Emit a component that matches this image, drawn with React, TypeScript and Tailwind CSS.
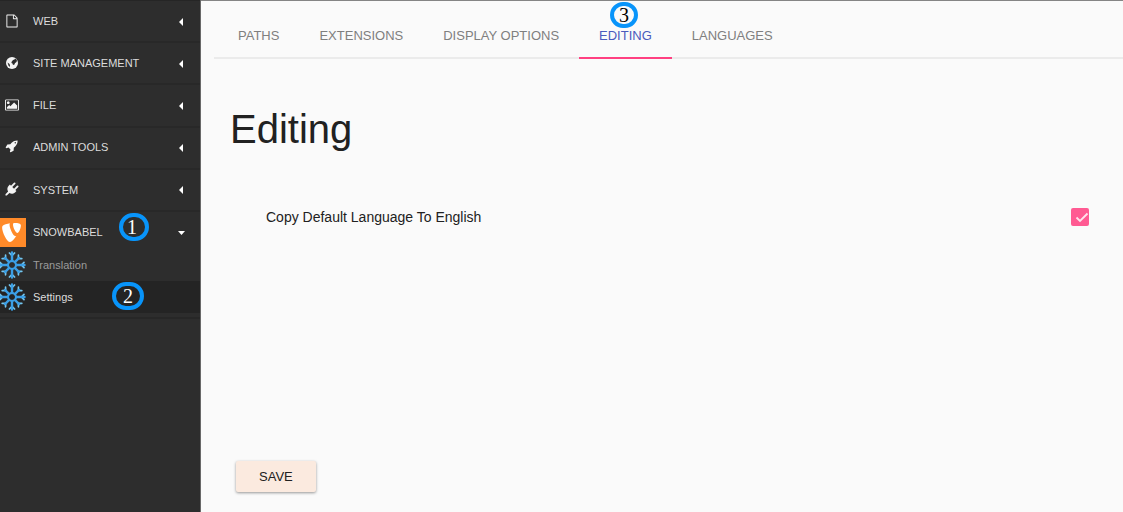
import { useState } from 'react';
import type { ReactNode } from 'react';
import { SiTypo3 } from 'react-icons/si';

const iconPaths = {
  web: 'M1596 380q28 28 48 76t20 88v1152q0 40-28 68t-68 28h-1344q-40 0-68-28t-28-68v-1600q0-40 28-68t68-28h896q40 0 88 20t76 48zm-444-244v376h376q-10-29-22-41l-313-313q-12-12-41-22zm384 1528v-1024h-416q-40 0-68-28t-28-68v-416h-768v1536h1280z',
  file: 'M576 576q0 80-56 136t-136 56-136-56-56-136 56-136 136-56 136 56 56 136zm1024 384v448h-1408v-192l320-320 160 160 512-512zm96-704h-1600q-13 0-22.5 9.5t-9.5 22.5v1216q0 13 9.5 22.5t22.5 9.5h1600q13 0 22.5-9.5t9.5-22.5v-1216q0-13-9.5-22.5t-22.5-9.5zm160 32v1216q0 66-47 113t-113 47h-1600q-66 0-113-47t-47-113v-1216q0-66 47-113t113-47h1600q66 0 113 47t47 113z',
  tools:
    'M1440 320q0-40-28-68t-68-28-68 28-28 68 28 68 68 28 68-28 28-68zm224-288q0 249-75.5 430.5t-253.5 360.5q-81 80-195 176l-20 379q-2 16-16 26l-384 224q-7 4-16 4-12 0-23-9l-64-64q-13-14-8-32l85-276-281-281-276 85q-3 1-9 1-14 0-23-9l-64-64q-17-19-5-39l224-384q10-14 26-16l379-20q96-114 176-195 188-187 358-258t431-71q14 0 24 9.5t10 22.5z',
  system:
    'M1755 453q37 38 37 90.5t-37 90.5l-401 400 150 150-160 160q-163 163-389.5 186.5t-411.5-100.5l-362 362h-181v-181l362-362q-124-185-100.5-411.5t186.5-389.5l160-160 150 150 400-401q38-37 91-37t90 37 37 90.5-37 90.5l-400 401 234 234 401-400q38-37 91-37t90 37z',
};

function PathIcon({ d }: { d: string }) {
  return (
    <svg viewBox="-64 0 1920 1792" className="h-[14px] w-[14px] fill-[#f4f4f4]" aria-hidden="true">
      <path d={d} />
    </svg>
  );
}

function GlobeIcon() {
  return (
    <svg viewBox="0 0 24 24" className="ml-px h-3 w-3" aria-hidden="true">
      <circle cx="12" cy="12" r="12" className="fill-[#f4f4f4]" />
      <path d="M11 10l3-4 3-1 1-2 3 2 1 3-2 3-2 1-1 3-3 1-1-3-2-1z" className="fill-[#2d2d2d]" />
      <path d="M3 11l4 3 1 3v3l-3-3z" className="fill-[#2d2d2d]" />
    </svg>
  );
}

const arms = [0, 45, 90, 135, 180, 225, 270, 315];

function SnowflakeIcon() {
  return (
    <svg viewBox="-14 -14 28 28" className="h-7 w-7" fill="none" strokeWidth="2.4" strokeLinecap="round" aria-hidden="true">
      {arms.map((a) => (
        <g key={a} transform={`rotate(${a})`}>
          <path d={a % 90 ? 'M-2.4-11.5 0-9 2.4-11.5' : 'M-2.6-12 0-9.5 2.6-12'} stroke="#74c6ef" strokeWidth="1.7" />
          <path d={a % 90 ? 'M0-4V-10' : 'M0-4V-12.5'} stroke="#3b9fe6" />
        </g>
      ))}
      <circle r="4" stroke="#3b9fe6" strokeWidth="2" />
    </svg>
  );
}

function Caret({ open }: { open?: boolean }) {
  return (
    <svg viewBox="0 0 8 8" className="mt-px mr-[15px] ml-auto h-2 w-2 fill-white" aria-hidden="true">
      <path d={open ? 'M1 2h7L4.5 6z' : 'M6 0v8L2 4z'} />
    </svg>
  );
}

const modules = [
  { label: 'WEB', icon: <PathIcon d={iconPaths.web} /> },
  { label: 'SITE MANAGEMENT', icon: <GlobeIcon /> },
  { label: 'FILE', icon: <PathIcon d={iconPaths.file} /> },
  { label: 'ADMIN TOOLS', icon: <PathIcon d={iconPaths.tools} /> },
  { label: 'SYSTEM', icon: <PathIcon d={iconPaths.system} /> },
];

const tabs = ['PATHS', 'EXTENSIONS', 'DISPLAY OPTIONS', 'EDITING', 'LANGUAGES'];

function Marker({ className, children }: { className: string; children: ReactNode }) {
  return (
    <span
      className={`absolute flex items-center justify-center rounded-full border-4 border-[#0894fa] font-['Liberation_Serif',serif] text-xl leading-5 ${className}`}
    >
      {children}
    </span>
  );
}

function Sidebar() {
  return (
    <nav className="w-[201px] shrink-0 border-r border-[#686868] bg-[#2d2d2d] text-[11px] text-[#dcdcdc]">
      <ul className="grid h-[212px] grid-rows-5 border-t border-[#252525]">
        {modules.map((m) => (
          <li key={m.label} className="border-b-2 border-[#282828]">
            <button type="button" className="flex h-full w-full items-center">
              <span className="flex w-[33px] pb-px pl-[5px]">{m.icon}</span>
              {m.label}
              <Caret />
            </button>
          </li>
        ))}
      </ul>
      <div className="relative border-b-2 border-[#272727] pb-1">
        <button type="button" className="flex h-[37px] w-full items-center pt-1">
          <span className="mr-[7px] flex h-[29px] w-[26px] items-center bg-[#ff8a29] pl-[2px] text-white">
            <SiTypo3 size={19} />
          </span>
          SNOWBABEL
          <Caret open />
        </button>
        <Marker className="left-[119px] top-[1px] h-7 w-[30px] pr-1 text-white">1</Marker>
        <a href="#translation" className="flex h-8 items-center text-[#9b9b9b]">
          <span className="mr-[7px] -ml-[2px]">
            <SnowflakeIcon />
          </span>
          Translation
        </a>
        <a href="#settings" className="relative flex h-8 items-center bg-[#242424]">
          <span className="mr-[7px] -ml-[2px]">
            <SnowflakeIcon />
          </span>
          Settings
          <Marker className="left-[112px] top-[1px] h-7 w-8 text-white">2</Marker>
        </a>
      </div>
    </nav>
  );
}

export default function App() {
  const [active, setActive] = useState('EDITING');
  const [copyDefault, setCopyDefault] = useState(true);

  return (
    <div className="flex min-h-screen bg-[#fafafa] font-['Liberation_Sans',Arial,sans-serif] text-[#212121]">
      <Sidebar />
      <main className="flex min-w-0 flex-1 flex-col border-t border-[#858585]">
        <div role="tablist" className="ml-[13px] flex h-[58px] border-b-2 border-[#ebebeb] pl-1 text-[13px]">
          {tabs.map((t) => (
            <button
              key={t}
              type="button"
              role="tab"
              aria-selected={t === active}
              onClick={() => setActive(t)}
              className={`relative -mb-[2px] border-b-2 px-5 pt-[13px] ${
                t === active ? 'border-[#ff4081] text-[#4a5bbd]' : 'border-transparent text-[#7f7f7f]'
              }`}
            >
              {t}
              {t === 'EDITING' && <Marker className="top-[1px] left-[31px] h-[26px] w-7 text-black">3</Marker>}
            </button>
          ))}
        </div>
        <h1 className="mt-[46px] ml-[29px] text-[40px] leading-[48px]">Editing</h1>
        <div className="mt-[54px] mr-[34px] ml-[65px] flex items-center justify-between text-sm">
          <label htmlFor="copy-default">Copy Default Language To English</label>
          <span className="relative flex">
            <input
              id="copy-default"
              type="checkbox"
              checked={copyDefault}
              onChange={(e) => setCopyDefault(e.target.checked)}
              className="h-[18px] w-[18px] appearance-none rounded-xs border-2 border-[#757575] checked:border-[#ff5a92] checked:bg-[#ff5a92]"
            />
            {copyDefault && (
              <svg viewBox="0 0 18 18" className="pointer-events-none absolute inset-0 h-[18px] w-[18px]" aria-hidden="true">
                <path d="M5.5 9.5 9 13l7.5-7.5" fill="none" stroke="#ffe3ec" strokeWidth="1.8" />
              </svg>
            )}
          </span>
        </div>
        <div className="mt-auto mb-5 ml-[35px]">
          <button type="button" className="h-[31px] rounded-xs bg-[#fbeadf] px-[23px] text-[13px] shadow-[0_1px_3px_rgba(0,0,0,0.4)]">
            SAVE
          </button>
        </div>
      </main>
    </div>
  );
}
